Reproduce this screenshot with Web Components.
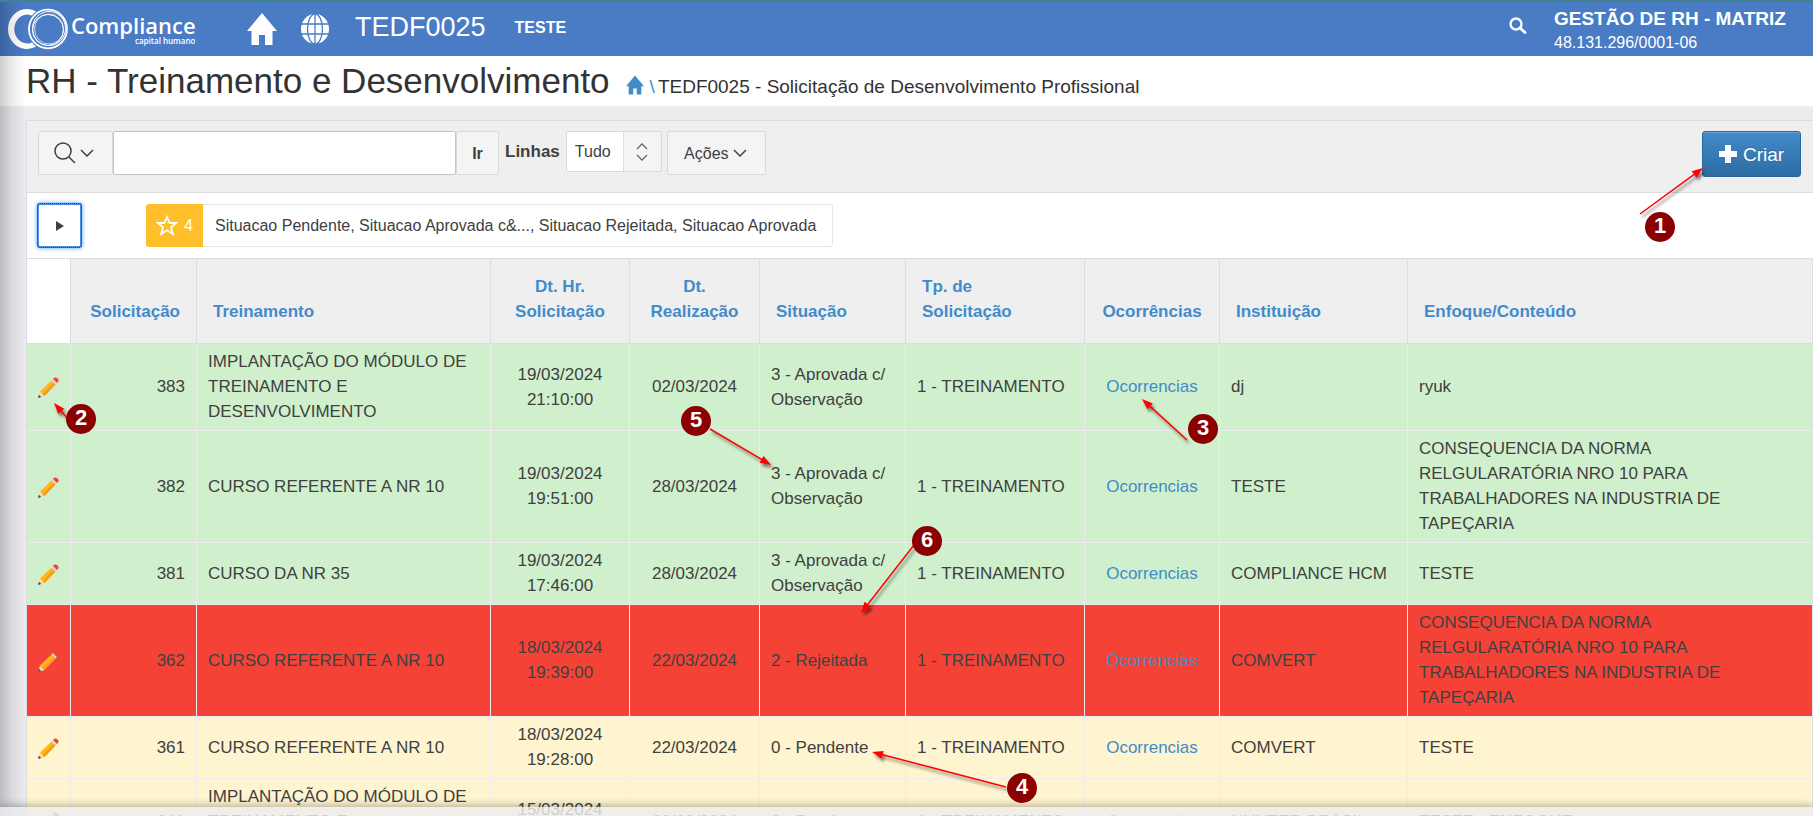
<!DOCTYPE html>
<html lang="pt-BR">
<head>
<meta charset="utf-8">
<title>TEDF0025 - Solicitação de Desenvolvimento Profissional</title>
<style>
html,body{margin:0;height:100%}
body{font:17px/25px "Liberation Sans",Arial,sans-serif;color:#404040;overflow:hidden}
</style>
</head>
<body>
<training-app></training-app>
<script>
const define=(name,html,setup)=>customElements.define(name,class extends HTMLElement{
  constructor(){super();this.attachShadow({mode:'open'}).innerHTML=html;if(setup)setup(this.shadowRoot,this);}
});
const home='<svg viewBox="0 0 30 32" aria-hidden="true"><path fill="currentColor" d="M15 0 30 18H25.500V32H18V22H12V32H4.500V18H0Z"/></svg>';

define('brand-logo',`<style>:host{display:block;width:190px;height:48px}svg{display:block}</style>
<svg width="190" height="48" viewBox="0 0 190 48" role="img" aria-label="Compliance capital humano">
<path d="M32 7A19 20 0 1 0 32 41L28 37A13 14.500 0 1 1 28 11Z" fill="#fff"/>
<ellipse cx="43" cy="24" rx="20.500" ry="21.500" fill="#4a7bc5"/>
<g fill="none" stroke="#fff"><ellipse cx="43" cy="24" rx="19" ry="19.300" stroke-width="1.800"/><ellipse cx="44" cy="23.500" rx="16.500" ry="17" stroke-width="1"/><ellipse cx="43" cy="25" rx="15.500" ry="15.500" stroke-width="1"/><ellipse cx="44" cy="24" rx="14.500" ry="15" stroke-width=".7"/></g>
<g fill="#fff" font-family="'Open Sans','Noto Sans',sans-serif"><text x="66" y="29" font-size="22" font-weight="600">Compliance</text><text x="130" y="39" font-size="8" font-weight="600">capital humano</text></g>
</svg>`);

define('app-header',`<style>
:host{display:flex;align-items:center;height:54px;border-top:2px solid #40828c;background:#4a7bc5;color:#fff}
a{color:inherit;display:block}svg{display:block}
brand-logo{margin-left:5px}
.home{width:30px;margin-left:52px}.globe{width:28px;margin-left:24px}
.code{font-size:27px;line-height:32px;margin:0 0 4px 26px}
.env{font-size:16px;font-weight:bold;margin:0 0 4px 29px}
button{margin-left:auto;padding:0;border:0;background:none;color:inherit;width:18px;margin-bottom:6px}
.company{width:259px;margin-left:27px;padding-top:4px}
.company b{display:block;font-size:19px;line-height:24px}
.company span{display:block;font-size:16px;line-height:24px}
</style>
<brand-logo></brand-logo>
<a class="home" href="#" aria-label="Início">${home}</a>
<a class="globe" href="#" aria-label="Idioma"><svg viewBox="0 0 28 30"><ellipse cx="14" cy="15" rx="14" ry="15" fill="#fff"/><g fill="none" stroke="#4a7bc5" stroke-width="1.300"><path d="M0 10H28M0 20H28M14 0V30"/><ellipse cx="14" cy="15" rx="7.500" ry="15"/></g></svg></a>
<span class="code">TEDF0025</span><span class="env">TESTE</span>
<button aria-label="Pesquisar"><svg width="18" height="18" viewBox="0 0 18 18" fill="none" stroke="#fff"><circle cx="7" cy="7" r="5.500" stroke-width="2.300"/><path d="M11 11 16 15.500" stroke-width="3" stroke-linecap="round"/></svg></button>
<div class="company"><b>GESTÃO DE RH - MATRIZ</b><span>48.131.296/0001-06</span></div>`);

define('page-heading',`<style>
:host{display:flex;align-items:baseline;height:50px;padding-left:26px;background:#fff;color:#333}
h1{margin:0;font-size:35px;line-height:50px;font-weight:normal}
nav{display:flex;align-items:baseline;margin-left:16px;font-size:19px;line-height:24px}
a{color:#428bca;width:18px}svg{display:block;width:18px;height:20px;position:relative;top:2px}
.sep{color:#428bca;margin:0 3px 0 6px}
</style><h1>RH - Treinamento e Desenvolvimento</h1>
<nav aria-label="Trilha"><a href="#" aria-label="Início">${home}</a><span class="sep">\\</span><span>TEDF0025 - Solicitação de Desenvolvimento Profissional</span></nav>`);

const down='<svg width="14" height="8" viewBox="0 0 14 8" fill="none" stroke="#404040" stroke-width="1.500" aria-hidden="true"><path d="M1 1 7 7 13 1"/></svg>';
define('report-toolbar',`<style>
:host{display:flex;align-items:flex-start;height:61px;padding:10px 12px 0 11px;background:#efefef;border-bottom:1px solid #ddd;font-size:16px}
*{box-sizing:border-box}
button,input,select{font:inherit;color:#404040;border:1px solid #d9d9d9;border-radius:2px;height:44px;margin:0}
button{background:#f4f4f4;display:flex;align-items:center;justify-content:center;gap:4px;padding:0}
.find{width:75px;padding-right:4px}.go{width:43px;font-weight:bold}
input{width:343px;background:#fff;border-color:#c4c4c4;padding:0 10px}
label{font-size:17px;font-weight:bold;line-height:42px;margin:0 6px}
.sel{display:grid;width:96px;margin-right:5px}.sel>*{grid-area:1/1}
select{appearance:none;width:96px;height:41px;padding:0 8px;background:linear-gradient(90deg,#fff 56px,#ddd 56px,#ddd 57px,#f4f4f4 57px)}
.sel svg{justify-self:end;align-self:center;margin-right:14px;pointer-events:none}
.act{width:99px;padding-right:2px}
.new{width:99px;height:46px;margin-left:auto;background:linear-gradient(#428bca,#2d6ca2);border-color:#2b669a;border-radius:3px;color:#fff;font-size:19px;gap:6px;box-shadow:inset 0 1px 0 #6ba5d6;text-shadow:0 -1px 0 #0003}
</style>
<button class="find" aria-label="Selecionar colunas"><svg width="22" height="22" viewBox="0 0 22 22" fill="none" stroke="#404040" stroke-width="1.500"><circle cx="9" cy="9" r="8"/><path d="M14.500 14.500 21 21"/></svg>${down}</button>
<input type="text" aria-label="Pesquisar no relatório">
<button class="go">Ir</button>
<label for="rows">Linhas</label>
<span class="sel"><select id="rows"><option>Tudo</option></select><svg width="12" height="18" viewBox="0 0 12 18" fill="none" stroke="#666" stroke-width="1.300"><path d="M1 6 6 1 11 6M1 12 6 17 11 12"/></svg></span>
<button class="act">Ações${down}</button>
<button class="new"><svg width="18" height="18" viewBox="0 0 18 18" aria-hidden="true"><path fill="#fff" d="M6 0H12V6H18V12H12V18H6V12H0V6H6Z"/></svg>Criar</button>`);

define('filter-bar',`<style>
:host{display:flex;align-items:center;height:65px;padding-left:10px;background:#fff;border-bottom:1px solid #ddd;font-size:16px}
button{box-sizing:border-box;width:45px;height:45px;padding:0;background:#fff;border:2px solid #4a90e8;outline:1px dotted #234;outline-offset:-1px;border-radius:3px;box-shadow:0 0 4px #4d9bff;display:grid;place-items:center}
.chip{display:flex;margin-left:64px;height:43px;line-height:41px}
.n{display:flex;align-items:center;justify-content:center;gap:6px;width:57px;background:#ffbf2b;color:#fff;border-radius:3px 0 0 3px}
.t{color:#404040;border:1px solid #e6e6e6;border-left:0;border-radius:0 3px 3px 0;padding:0 16px 0 12px;text-decoration:none}
</style>
<button aria-label="Expandir filtros"><svg width="8" height="12" viewBox="0 0 8 12"><path d="M0 1 8 6 0 11Z" fill="#404040"/></svg></button>
<div class="chip"><span class="n"><svg width="22" height="21" viewBox="0 0 22 21" fill="none" stroke="#fff" stroke-width="1.800"><path d="M11 2 13.600 8H20L15 12.200 16.800 19 11 15.300 5.200 19 7 12.200 2 8H8.400Z"/></svg>4</span><a class="t" href="#">Situacao Pendente, Situacao Aprovada c&amp;..., Situacao Rejeitada, Situacao Aprovada</a></div>`);

const NORMA='CONSEQUENCIA DA NORMA RELGULARATÓRIA NRO 10 PARA TRABALHADORES NA INDUSTRIA DE TAPEÇARIA';
const MODULO='IMPLANTAÇÃO DO MÓDULO DE TREINAMENTO E DESENVOLVIMENTO';
const NR10='CURSO REFERENTE A NR 10';
const rows=[
 ['ok','383',MODULO,'19/03/2024 21:10:00','02/03/2024','3 - Aprovada c/ Observação','dj','ryuk'],
 ['ok','382',NR10,'19/03/2024 19:51:00','28/03/2024','3 - Aprovada c/ Observação','TESTE',NORMA],
 ['ok','381','CURSO DA NR 35','19/03/2024 17:46:00','28/03/2024','3 - Aprovada c/ Observação','COMPLIANCE HCM','TESTE'],
 ['no','362',NR10,'18/03/2024 19:39:00','22/03/2024','2 - Rejeitada','COMVERT',NORMA],
 ['wait','361',NR10,'18/03/2024 19:28:00','22/03/2024','0 - Pendente','COMVERT','TESTE'],
 ['wait','341',MODULO,'15/03/2024 15:30:00','22/03/2024','0 - Pendente','HUNTER BRASIL','TESTE - ENFOQUE']];
const pencil='<svg width="22" height="22" viewBox="0 0 22 22"><path fill="#fed9a0" d="M1 21 3 14.500 7.500 19Z"/><path fill="#37474f" d="M1 21 1.900 17.800 4.200 20.100Z"/><path fill="#ffb819" d="M3 14.500 14.500 3.500 18.500 7.500 7.500 19Z"/><path fill="#f79c1d" d="M5.500 17 16.700 5.700 18.500 7.500 7.500 19Z"/><path fill="#d5dce0" d="M14.500 3.500 16 2 20 6 18.500 7.500Z"/><path fill="#f44336" d="M16 2Q18 -.5 20.500 1.500T20 6Z"/></svg>';
define('request-table',`<style>
:host{display:block;background:#fff}
table{width:100%;table-layout:fixed;border-collapse:separate;border-spacing:0}
th,td{border-right:1px solid #eeecef;border-bottom:1px solid #eeecef;overflow-wrap:break-word}
th:last-child,td:last-child{border-right-color:#ddd}
th{height:50px;padding:15px 16px 19px;background:#efefef;border-color:#ddd;vertical-align:bottom;text-align:left}
th:first-child{background:#fff;padding:0}
td{padding:5px 11px 6px;color:#404040}
td:first-child{padding:0 1px 0 0;text-align:center}td:first-child a{display:inline-block;vertical-align:middle}
svg{display:block}
a{color:#428bca;text-decoration:none}
.c{text-align:center}.r{text-align:right}
.ok{background:#d0f0cd}.no{background:#f44336}.wait{background:#fff4d0}
.e{padding-right:60px}
</style><table><colgroup></colgroup><thead><tr></tr></thead><tbody></tbody></table>`,root=>{
  root.querySelector('colgroup').innerHTML=[44,126,294,139,130,146,179,135,188].map(w=>`<col style="width:${w}px">`).join('')+'<col>';
  const cols=[['',''],['r','Solicitação'],['','Treinamento'],['c','Dt. Hr. Solicitação'],['c','Dt. Realização'],['','Situação'],['','Tp. de<br>Solicitação'],['c','Ocorrências'],['','Instituição'],['','Enfoque/Conteúdo']];
  root.querySelector('thead tr').innerHTML=cols.map(([c,t])=>t?`<th class="${c}" scope="col"><a href="#">${t}</a></th>`:'<th></th>').join('');
  root.querySelector('tbody').innerHTML=rows.map(([k,n,t,h,d,s,i,e])=>`<tr class="${k}"><td><a href="#" aria-label="Editar ${n}">${pencil}</a></td><td class="r">${n}</td><td>${t}</td><td class="c">${h}</td><td class="c">${d}</td><td>${s}</td><td>1 - TREINAMENTO</td><td class="c"><a href="#">Ocorrencias</a></td><td>${i}</td><td class="e">${e}</td></tr>`).join('');
});

define('callout-layer',`<style>:host{position:absolute;inset:0;pointer-events:none}svg{display:block;width:100%;height:100%}</style><svg></svg>`,root=>{
  const marks=[[1,1660,227,1640,214,1703,168],[2,81,419,68,419,54,403],[5,696,421,710,429,771,465],[3,1203,429,1187,440,1142,399],[6,927,541,914,545,861,613],[4,1022,788,1006,787,872,752]];
  root.querySelector('svg').innerHTML='<defs><filter id="s" x="-50%" y="-50%" width="200%" height="200%"><feDropShadow dx="2" dy="3" stdDeviation="1.500" flood-opacity=".5"/></filter></defs>'+marks.map(([n,cx,cy,x1,y1,x2,y2])=>{
    const a=Math.atan2(y2-y1,x2-x1),p=(d,o)=>(x2-d*Math.cos(a)-o*Math.sin(a))+','+(y2-d*Math.sin(a)+o*Math.cos(a));
    const b=p(8,0).split(',');
    return `<g filter="url(#s)"><path d="M${x1} ${y1}L${b}" stroke="#f00" stroke-width="1.500"/><path d="M${x2},${y2}L${p(11,4)}L${p(11,-4)}Z" fill="#f00"/></g><circle cx="${cx}" cy="${cy}" r="15" fill="#8b0000"/><text x="${cx}" y="${cy+6}" text-anchor="middle" font-size="22" font-weight="bold" fill="#fff">${n}</text>`}).join('');
});

define('training-app',`<style>
:host{display:block;position:relative;height:100vh;overflow:hidden;background:#ebebf0}
main{margin:14px 0 0 26px;border:1px solid #ddd;border-right:0}
.edge{position:absolute;left:0;top:2px;bottom:0;width:26px;background:linear-gradient(90deg,#00000033,#00000014 45%,#0000);pointer-events:none}
footer{position:absolute;left:0;right:0;bottom:0;height:9px;background:#ececeed0;box-shadow:0 -1px 8px #0005}
</style>
<app-header></app-header><page-heading></page-heading>
<main><report-toolbar></report-toolbar><filter-bar></filter-bar><request-table></request-table></main>
<div class="edge"></div><footer></footer><callout-layer></callout-layer>`);
</script>
</body>
</html>
